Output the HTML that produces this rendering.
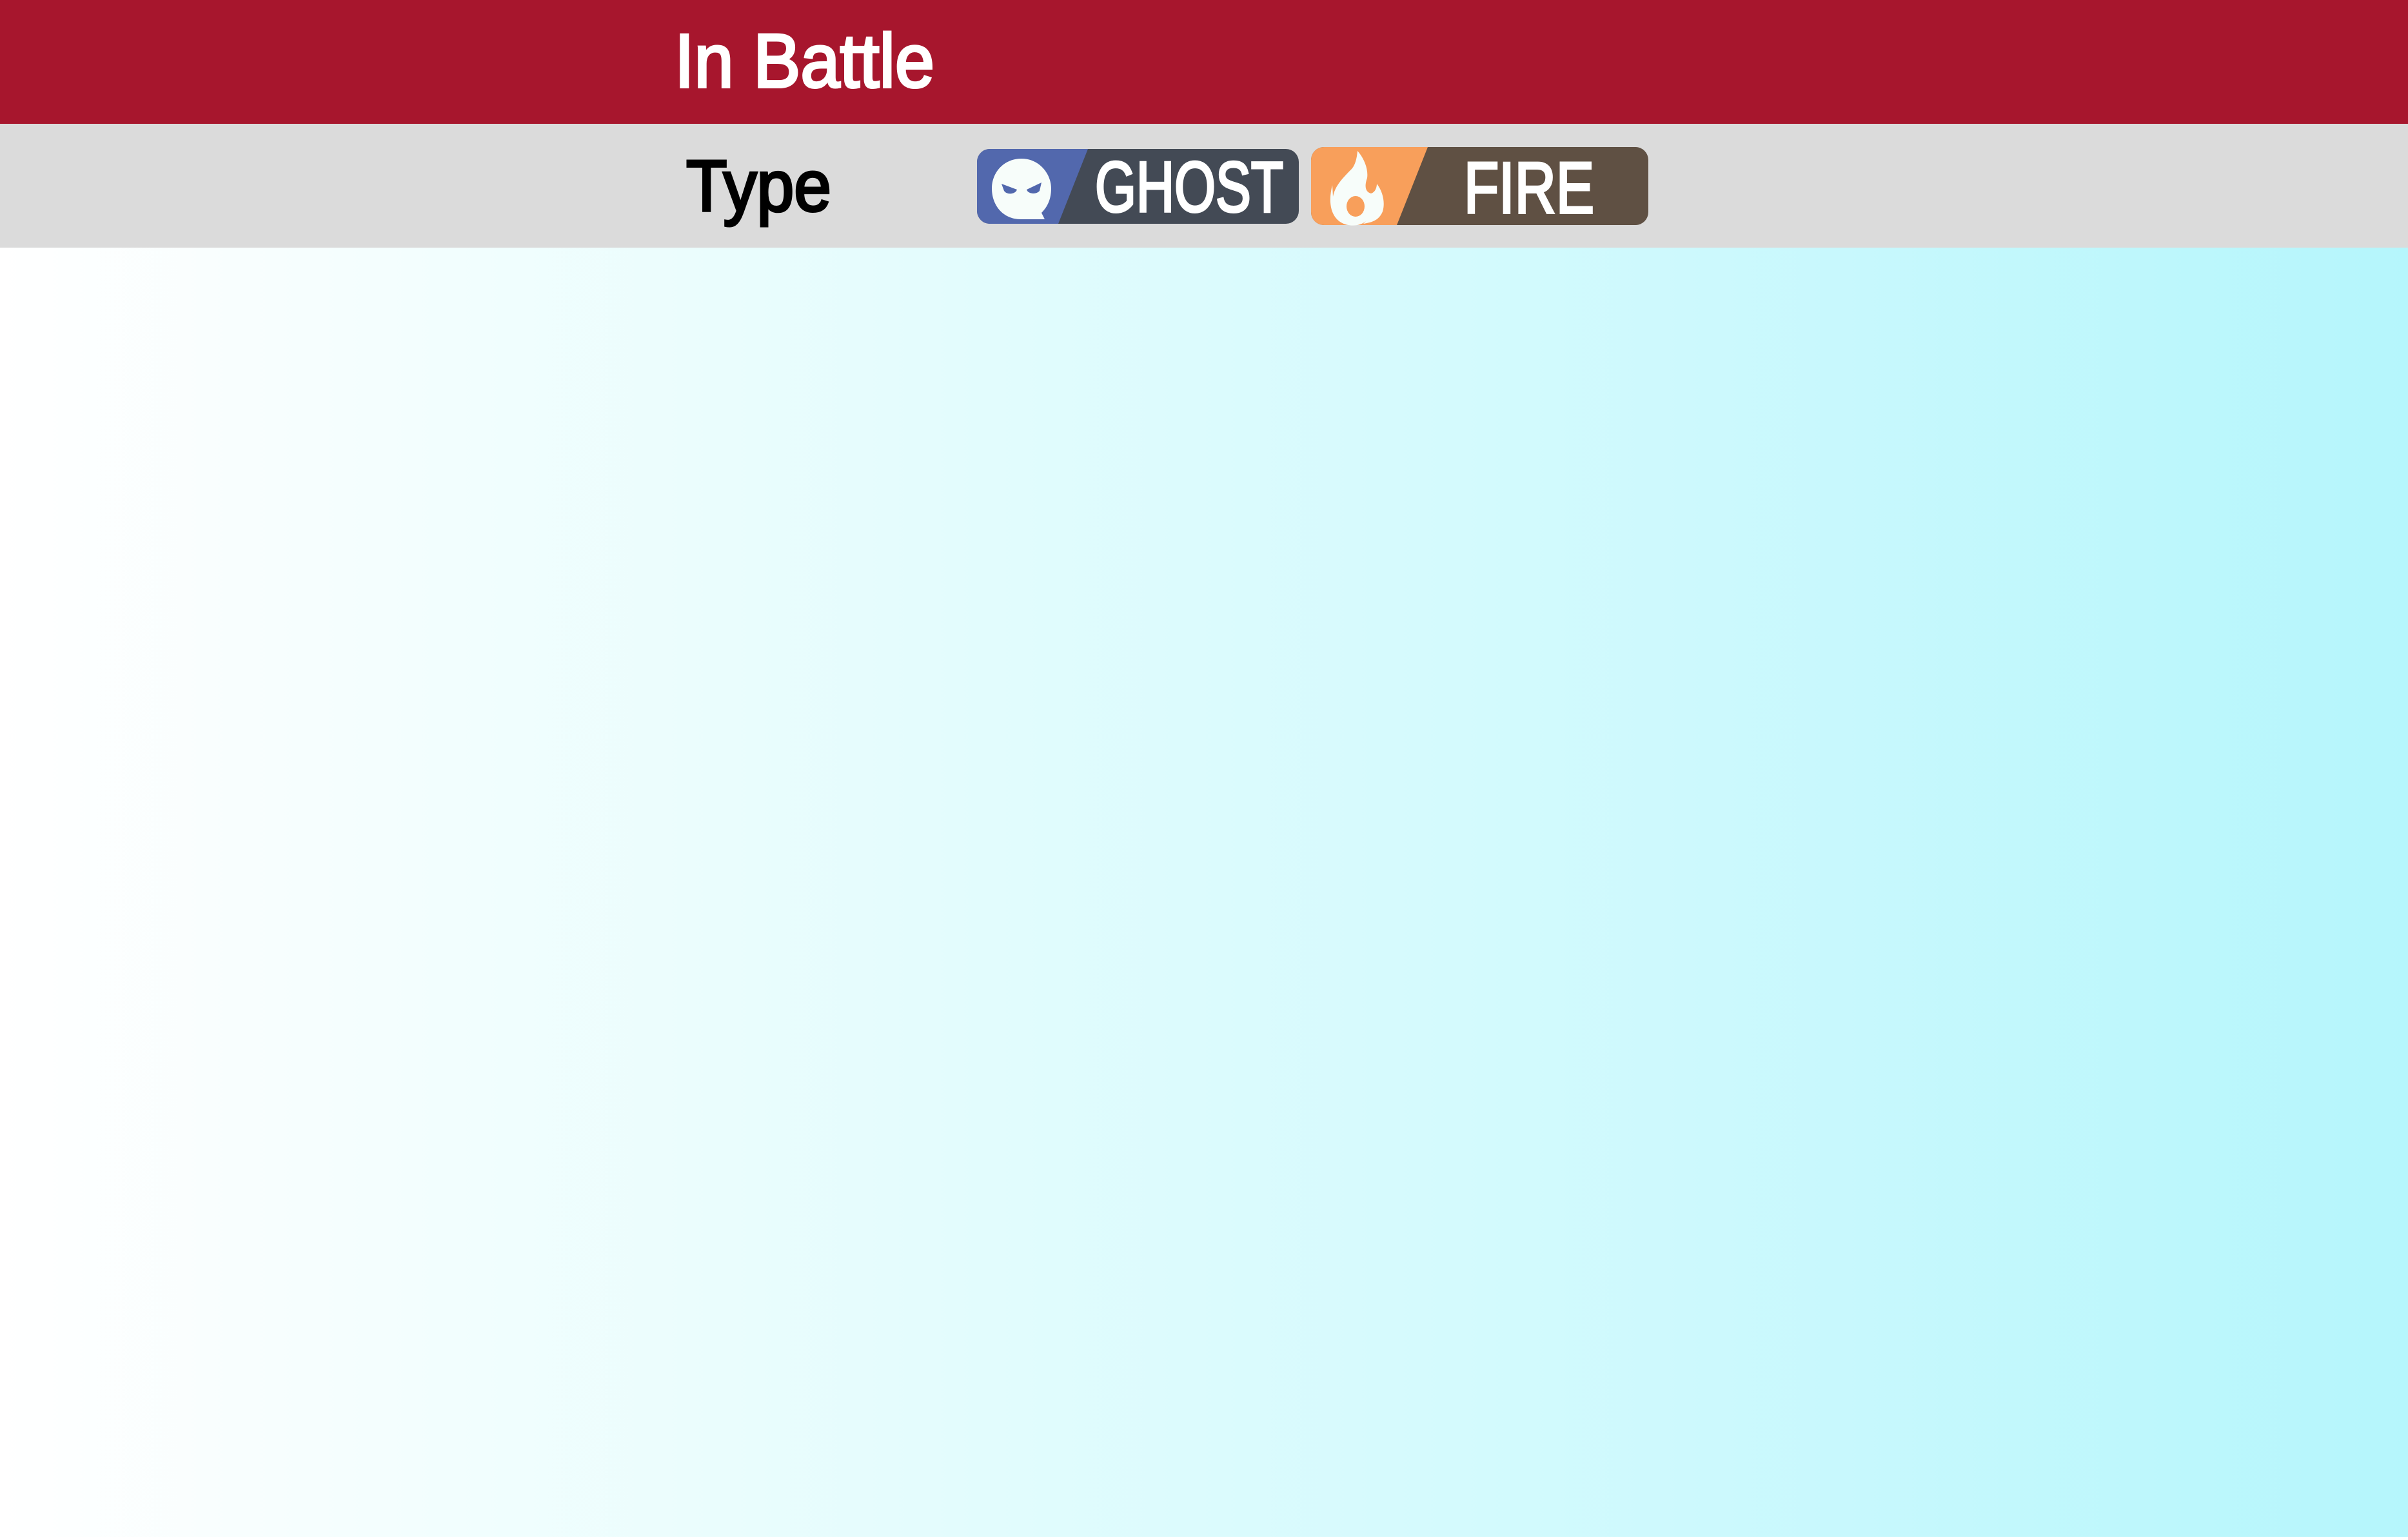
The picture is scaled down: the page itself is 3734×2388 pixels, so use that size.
<!DOCTYPE html>
<html><head><meta charset="utf-8"><style>
html,body{margin:0;padding:0;width:3734px;height:2388px;overflow:hidden;background:#fff}
svg{display:block}
</style></head><body>
<svg width="3734" height="2388" viewBox="0 0 3734 2388" xmlns="http://www.w3.org/2000/svg">
<defs>
<linearGradient id="g" x1="0" y1="0" x2="1" y2="0">
<stop offset="0" stop-color="#ffffff"/>
<stop offset="0.3" stop-color="#eafdfd"/>
<stop offset="0.7" stop-color="#cdf9fd"/>
<stop offset="1" stop-color="#b5f6fc"/>
</linearGradient>
<clipPath id="cg"><rect x="1515" y="231" width="499" height="116" rx="20"/></clipPath>
<clipPath id="cf"><rect x="2033" y="228" width="523" height="121" rx="20"/></clipPath>
</defs>
<rect x="0" y="384" width="3734" height="1999" fill="url(#g)"/>
<rect x="0" y="0" width="3734" height="192" fill="#a7162d"/>
<rect x="0" y="192" width="3734" height="192" fill="#dbdbdb"/>
<text x="1046" y="135" font-family="Liberation Sans, sans-serif" font-size="118" fill="#fff" stroke="#fff" stroke-width="4" textLength="403" lengthAdjust="spacingAndGlyphs">In Battle</text>
<text x="1064" y="327" font-family="Liberation Sans, sans-serif" font-size="112" fill="#000" stroke="#000" stroke-width="4" textLength="225" lengthAdjust="spacingAndGlyphs">Type</text>
<g clip-path="url(#cg)">
<rect x="1515" y="231" width="499" height="116" fill="#434a55"/>
<polygon points="1515,231 1687,231 1641,347 1515,347" fill="#5268ad"/>
</g>
<path d="M1584 246 C1612 246 1630 270 1630 292 C1630 308 1625 320 1615 330 L1620 340 L1583 340 C1555 340 1538 318 1538 292 C1538 268 1556 246 1584 246 Z" fill="#f7fdfa"/>
<path d="M1553 285 L1577 294 C1575 301 1562 303 1557 296 Z" fill="#5268ad"/>
<path d="M1615 283 L1592 294 C1594 301 1607 302 1612 296 Z" fill="#5268ad"/>
<text x="1698" y="328" font-family="Liberation Sans, sans-serif" font-size="110" fill="#fff" stroke="#fff" stroke-width="4" textLength="292" lengthAdjust="spacingAndGlyphs">GHOST</text>
<g clip-path="url(#cf)">
<rect x="2033" y="228" width="523" height="121" fill="#5f5043"/>
<polygon points="2033,228 2214,228 2166,349 2033,349" fill="#f89f5b"/>
</g>
<path d="M2105 234 C2115 245 2122 262 2120 276 C2115 290 2118 298 2126 300 C2133 298 2135 290 2135 285 C2145 298 2148 315 2144 328 C2138 343 2125 345 2114 347 L2120 341 C2110 352 2090 352 2078 344 C2062 333 2060 310 2066 287 L2067 305 C2070 290 2078 280 2096 262 C2102 255 2104 245 2105 234 Z" fill="#f7fdfa"/>
<ellipse cx="2102" cy="320" rx="14" ry="16" fill="#f89f5b"/>
<text x="2270" y="330" font-family="Liberation Sans, sans-serif" font-size="112" fill="#fff" stroke="#fff" stroke-width="4" textLength="202" lengthAdjust="spacingAndGlyphs">FIRE</text>
</svg>
</body></html>
